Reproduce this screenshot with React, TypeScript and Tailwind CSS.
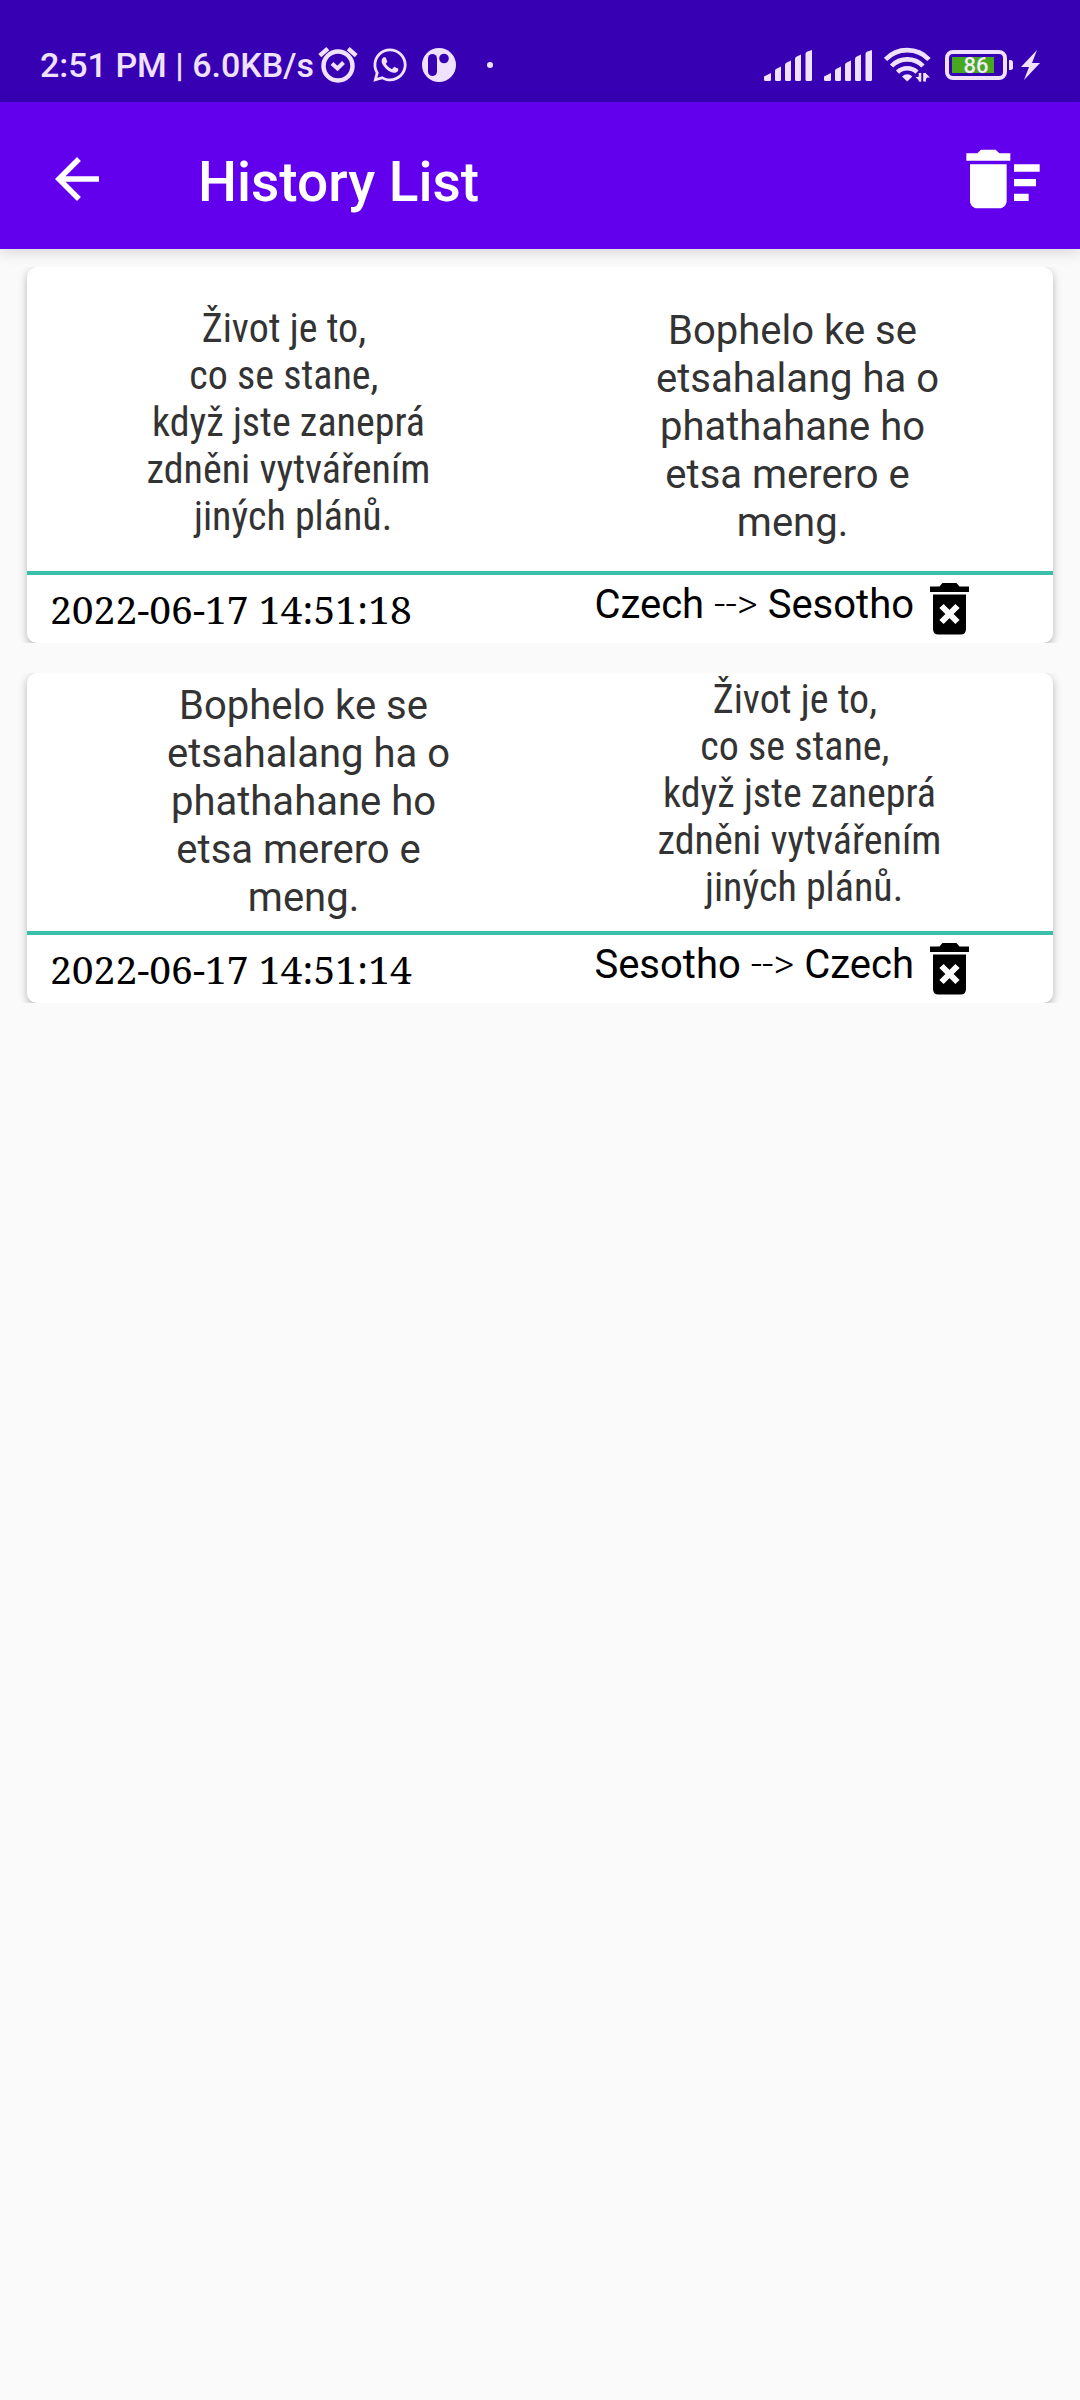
import { FaWhatsapp } from 'react-icons/fa'
import { MdDeleteSweep } from 'react-icons/md'

interface Phrase {
  lang: string
  lines: string[]
}

interface HistoryEntry {
  id: number
  from: Phrase
  to: Phrase
  savedAt: string
  fromClass: string
  toClass: string
}

const czech: Phrase = {
  lang: 'cs',
  lines: ['Život je to, ', 'co se stane, ', 'když jste zaneprá', 'zdněni vytvářením', ' jiných plánů.'],
}

const sesotho: Phrase = {
  lang: 'st',
  lines: ['Bophelo ke se', ' etsahalang ha o', 'phathahane ho', 'etsa merero e ', 'meng.'],
}

const languageNames: Record<string, string> = { cs: 'Czech', st: 'Sesotho' }

const entries: HistoryEntry[] = [
  { id: 2, from: czech, to: sesotho, savedAt: '2022-06-17 14:51:18', fromClass: 'pt-[38px] pl-2.5', toClass: 'pt-10 pb-6 pr-2' },
  { id: 1, from: sesotho, to: czech, savedAt: '2022-06-17 14:51:14', fromClass: 'pt-[9px] pb-[9px] pl-10', toClass: 'pt-[3px] pl-1.5' },
]

function AlarmIcon() {
  return (
    <svg width="40" height="38" viewBox="0 0 40 38" fill="none" stroke="currentColor" aria-hidden="true">
      <circle cx="20" cy="20" r="14.5" strokeWidth="4.5" />
      <path d="M14 17.5l5.5 5 6-6" strokeWidth="4" />
      <path d="M1.8 9.6L9.8 2.6M38.2 9.6l-8-7" strokeWidth="4.5" />
    </svg>
  )
}

function AppBadgeIcon() {
  return (
    <svg width="34" height="34" viewBox="0 0 34 34" aria-hidden="true">
      <circle cx="17" cy="17" r="17" fill="currentColor" />
      <rect x="6" y="6" width="9" height="22" rx="4.5" fill="#3700b3" />
      <circle cx="22" cy="10.5" r="4.8" fill="#3700b3" />
    </svg>
  )
}

function SignalIcon() {
  return (
    <svg width="48" height="31" viewBox="0 0 48 31" fill="currentColor" aria-hidden="true">
      <path d="M0 26.5l7-3.500v6.500q0 1.500-1.500 1.500h-4Q0 31 0 29.500z" />
      <path d="M11 20.5q0-1 1-1.500l5-2.500v13q0 1.500-1.500 1.500h-3Q11 31 11 29.500z" />
      <path d="M21 15q0-1.500 1.300-2.200l4.700-2.300v19q0 1.500-1.500 1.500h-3Q21 31 21 29.500z" />
      <path d="M31 9q0-1.500 1.300-2.200L37 4.500v25q0 1.500-1.500 1.500h-3Q31 31 31 29.500z" />
      <path d="M41.5 4q0-1.500 1.300-2.200L48 0v29.500q0 1.500-1.500 1.500H43q-1.500 0-1.500-1.500z" />
    </svg>
  )
}

function WifiIcon() {
  return (
    <svg width="47" height="36" viewBox="0 0 47 36" fill="none" stroke="currentColor" aria-hidden="true">
      <path d="M1.5 12.5a30 30 0 0 1 43.500 0" strokeWidth="4.6" />
      <path d="M7.5 19a22 22 0 0 1 31.500 0" strokeWidth="4.6" />
      <path d="M13.5 25.2a14 14 0 0 1 19.500 0" strokeWidth="4.6" />
      <path d="M18 29.5q5.200-4.500 10.400 0l-5.200 5z" fill="currentColor" stroke="none" />
      <path d="M36.5 25.5v9.500l-5-5h3.200M41 35v-9.500l5 5h-3.200" fill="currentColor" stroke="none" />
      <path d="M36 26v8.500M40.5 26v8.500" strokeWidth="2.6" />
    </svg>
  )
}

function BatteryIcon() {
  return (
    <svg width="68" height="30" viewBox="0 0 68 30" aria-hidden="true">
      <rect x="2" y="2" width="58" height="26" rx="6" fill="none" stroke="currentColor" strokeWidth="4" />
      <rect x="7" y="7" width="42" height="16" fill="#47a81f" />
      <path d="M64 10h1.500q2.500 0 2.500 2.500v5q0 2.500-2.500 2.500H64z" fill="currentColor" />
      <text x="31" y="23" textAnchor="middle" fill="#f3eaff" fontSize="22" fontWeight="500">86</text>
    </svg>
  )
}

function BoltIcon() {
  return (
    <svg width="19" height="30" viewBox="0 0 19 30" fill="currentColor" aria-hidden="true">
      <path d="M16 0L0 17h8L3 30l16-17h-8z" />
    </svg>
  )
}

function DeleteEntryIcon() {
  return (
    <svg width="39" height="52" viewBox="0 0 39 52" aria-hidden="true">
      <path d="M0 3.5h9.500L12.5 0h14l3 3.500H39V9H0z" />
      <path d="M3 11.5h33V46q0 5.500-5.500 5.500h-22Q3 51.500 3 46z" />
      <path d="M11.5 23l16 16M27.5 23l-16 16" stroke="#fff" strokeWidth="6" />
    </svg>
  )
}

function StatusBar() {
  return (
    <div className="flex h-[102px] items-center justify-between bg-[#3700b3] px-10 pt-7 text-[#f0e2ff]">
      <div className="flex items-center">
        <span className="mr-1 text-[34px] leading-10 font-medium whitespace-nowrap">2:51 PM | 6.0KB/s</span>
        <div className="flex items-center gap-[15px]">
          <AlarmIcon />
          <FaWhatsapp className="h-[38px] w-[34px]" aria-hidden="true" />
          <AppBadgeIcon />
          <span className="ml-4 size-1.5 rounded-full bg-current" />
        </div>
      </div>
      <div className="flex items-center gap-3">
        <SignalIcon />
        <SignalIcon />
        <WifiIcon />
        <div className="ml-0.5 flex items-center gap-2">
          <BatteryIcon />
          <BoltIcon />
        </div>
      </div>
    </div>
  )
}

function AppBar() {
  return (
    <header className="flex h-[147px] items-center bg-[#6200ee] pt-1.5 pr-[33px] pl-11 text-white shadow-[0_3px_14px_rgba(0,0,0,0.15)]">
      <button type="button" aria-label="Back" className="mr-[88px]">
        <svg width="66" height="66" viewBox="0 0 24 24" fill="currentColor" aria-hidden="true">
          <path d="M20 11H7.830l5.590-5.590L12 4l-8 8 8 8 1.410-1.410L7.830 13H20v-2z" />
        </svg>
      </button>
      <h1 className="flex-1 pt-1.5 text-[55px] leading-16 font-medium">History List</h1>
      <button type="button" aria-label="Clear history">
        <MdDeleteSweep size={88} />
      </button>
    </header>
  )
}

function PhraseText({ phrase, className }: { phrase: Phrase; className: string }) {
  const textClass = phrase.lang === 'cs'
    ? "font-['Roboto_Condensed',Roboto,sans-serif] leading-[47px]"
    : 'leading-12'

  return (
    <p lang={phrase.lang} className={`text-center text-[40px] whitespace-pre text-[#333] ${textClass} ${className}`}>
      {phrase.lines.join('\n')}
    </p>
  )
}

function HistoryCard({ entry }: { entry: HistoryEntry }) {
  const { from, to, savedAt, fromClass, toClass } = entry

  return (
    // The row clips the card's shadow at its top and bottom edges
    <li className="overflow-hidden px-[27px]">
      <article className="rounded-[10px] bg-white shadow-[0_3px_8px_rgba(0,0,0,0.28)]">
        <div className="grid grid-cols-2">
          <PhraseText phrase={from} className={fromClass} />
          <PhraseText phrase={to} className={toClass} />
        </div>
        <div className="flex h-[72px] items-start justify-between border-t-4 border-[#3bbfad] pr-[84px] pl-[23px] text-black">
          <time className="pt-2.5 font-['Noto_Serif','Liberation_Serif',serif] text-[39px] leading-12">{savedAt}</time>
          <div className="flex items-start gap-4">
            <span className="pt-1.5 text-[40px] leading-12 whitespace-nowrap">
              {languageNames[from.lang]} <span className="font-light">--&gt;</span> {languageNames[to.lang]}
            </span>
            <button type="button" aria-label={`Delete entry from ${savedAt}`} className="pt-2">
              <DeleteEntryIcon />
            </button>
          </div>
        </div>
      </article>
    </li>
  )
}

export default function App() {
  return (
    <div className="min-h-screen bg-[#fafafa] font-[Roboto,sans-serif]">
      <StatusBar />
      <AppBar />
      <main className="pt-[18px]">
        <ul className="flex flex-col gap-[30px]">
          {entries.map(entry => (
            <HistoryCard key={entry.id} entry={entry} />
          ))}
        </ul>
      </main>
    </div>
  )
}
